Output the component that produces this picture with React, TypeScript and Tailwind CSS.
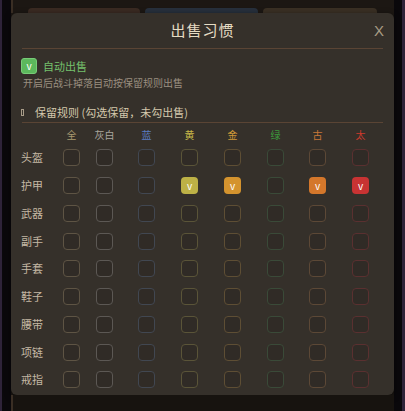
const FONT = "font-['Noto_Sans_CJK_SC','Noto_Sans',sans-serif]";

interface Tier {
  name: string;
  text: string;
  border: string;
  fill: string;
}

const TIERS: Tier[] = [
  { name: '全', text: 'text-[#a89a70]', border: 'border-[#5e5444]', fill: 'bg-[#d0a040]' },
  { name: '灰白', text: 'text-[#aaa69e]', border: 'border-[#5c5854]', fill: 'bg-[#a0a0a0]' },
  { name: '蓝', text: 'text-[#5a7cc4]', border: 'border-[#414751]', fill: 'bg-[#4a70c0]' },
  { name: '黄', text: 'text-[#c8b848]', border: 'border-[#5a5438]', fill: 'bg-[#bdb146]' },
  { name: '金', text: 'text-[#d09838]', border: 'border-[#5e4e34]', fill: 'bg-[#d4932e]' },
  { name: '绿', text: 'text-[#3c9a3c]', border: 'border-[#3a4a38]', fill: 'bg-[#3c9a3c]' },
  { name: '古', text: 'text-[#c87838]', border: 'border-[#5c4836]', fill: 'bg-[#d4772b]' },
  { name: '太', text: 'text-[#cc3a2c]', border: 'border-[#5a3030]', fill: 'bg-[#c83333]' },
];

const SLOTS = ['头盔', '护甲', '武器', '副手', '手套', '鞋子', '腰带', '项链', '戒指'];

// slot -> tiers that are kept
const KEEP: Record<string, number[]> = {
  护甲: [3, 4, 6, 7],
};

const GRID = 'grid grid-cols-[42px_33px_42px_43px_43px_43px_42px_43px_17px] items-center';

function Box({ tier, checked }: { tier: Tier; checked: boolean }) {
  if (checked) {
    return (
      <div className={`flex h-[17px] w-[17px] items-center justify-center rounded-[4px] ${tier.fill} text-[10px] leading-none text-white`}>
        v
      </div>
    );
  }
  return <div className={`h-[17px] w-[17px] rounded-[4px] border ${tier.border} bg-[#302b26]`} />;
}

export default function App() {
  return (
    <div className={`flex h-[411px] w-[405px] overflow-hidden bg-[#0a080b] ${FONT}`}>
      <div className="w-[2px] bg-[#2e2339]" />
      <div className="w-[9px]" />
      <div className="relative flex w-[383px] flex-col bg-[#1c1713]">
        <div className="flex h-[13px] items-end gap-[5px] border-l-2 border-[#3a2e24] pl-[15px]">
          <div className="h-[5px] w-[112px] rounded-t-[4px] bg-[#3a2a22]" />
          <div className="h-[5px] w-[113px] rounded-t-[4px] bg-[#27303c]" />
          <div className="h-[5px] w-[114px] rounded-t-[4px] bg-[#3a3024]" />
        </div>

        <div className="flex h-[382px] flex-col rounded-[6px] bg-[#35302a] shadow-[0_2px_6px_rgba(0,0,0,0.6)]">
          <div className="relative flex h-[35px] items-center justify-center">
            <span className="text-[15px] tracking-[1px] text-[#e6dcc4]">出售习惯</span>
            <span className="absolute right-[10px] top-[10px] font-['Liberation_Sans',sans-serif] text-[15px] leading-[15px] text-[#a89c84]">X</span>
          </div>
          <div className="mx-[11px] h-px bg-[#5a4434]" />

          <div className="mt-[9px] flex h-[16px] items-center gap-[6px] pl-[10px]">
            <div className="flex h-[16px] w-[16px] items-center justify-center rounded-[3px] border border-[#78cc78] bg-[#5cb85c] text-[10px] leading-none text-white">
              v
            </div>
            <span className="text-[11px] leading-[14px] text-[#74c06c]">自动出售</span>
          </div>
          <div className="mt-[3px] h-[12px] pl-[12px] text-[10px] leading-[12px] text-[#9a8f80]">
            开启后战斗掉落自动按保留规则出售
          </div>

          <div className="mt-[16px] flex h-[14px] items-center pl-[10px]">
            <span className="h-[7px] w-[3px] border border-[#a89c88]" />
            <span className="ml-[11px] text-[11px] leading-[14px] text-[#d4c8ac]">保留规则 (勾选保留，未勾出售)</span>
          </div>
          <div className="mx-[11px] mt-[3px] h-px bg-[#5a4434]" />

          <div className={`mt-[6px] h-[12px] pl-[10px] ${GRID}`}>
            <div />
            {TIERS.map((t) => (
              <div key={t.name} className="flex w-[17px] justify-center">
                <span className={`whitespace-nowrap text-[10px] leading-[12px] ${t.text}`}>{t.name}</span>
              </div>
            ))}
          </div>

          <div className="mt-[3px] flex flex-col">
            {SLOTS.map((slot) => (
              <div key={slot} className={`h-[27.75px] pl-[10px] ${GRID}`}>
                <span className="text-[11px] leading-none text-[#c4b8a4]">{slot}</span>
                {TIERS.map((t, i) => (
                  <Box key={t.name} tier={t} checked={(KEEP[slot] ?? []).includes(i)} />
                ))}
              </div>
            ))}
          </div>
        </div>

        <div className="flex-1 border-l-2 border-[#3a2e24] bg-[#17130f]" />
      </div>
      <div className="w-[8px]" />
      <div className="w-[3px] bg-[#2e2339]" />
    </div>
  );
}
